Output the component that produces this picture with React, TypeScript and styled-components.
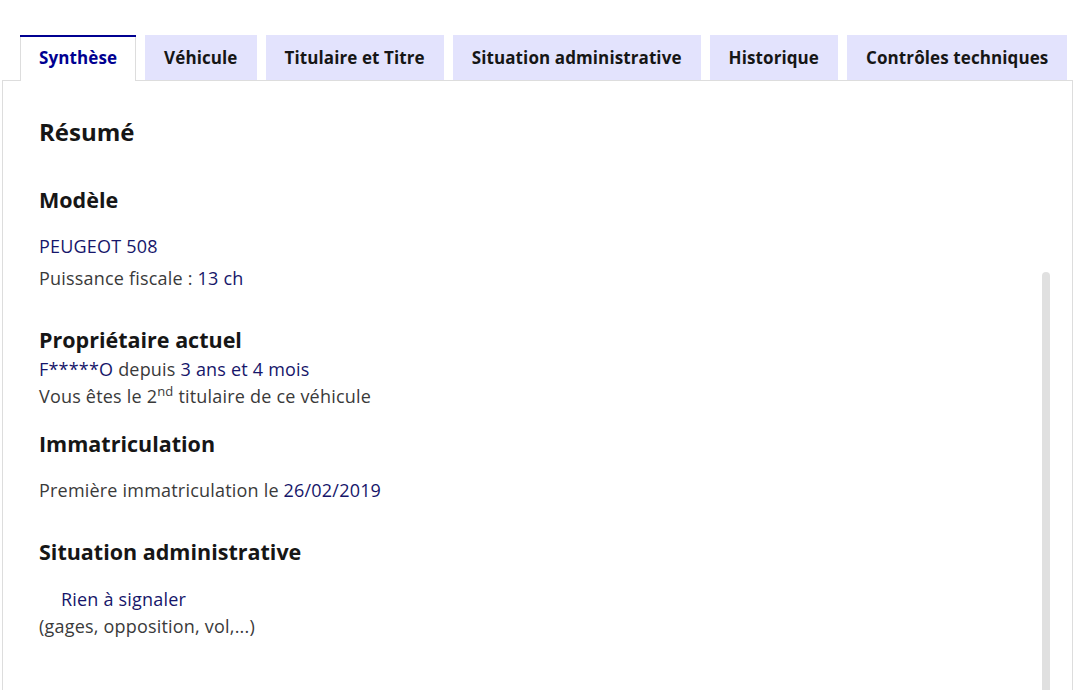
import React from 'react';
import styled, { createGlobalStyle } from 'styled-components';

const GlobalStyle = createGlobalStyle`
    * {
        box-sizing: border-box;
    }
    body {
        margin: 0;
        background: #ffffff;
        font-family: "Open Sans", "Noto Sans", Arial, sans-serif;
        color: #3a3a3a;
    }
`;

type TabProps = {
    $active?: boolean;
};

const tabs = [
    'Synthèse',
    'Véhicule',
    'Titulaire et Titre',
    'Situation administrative',
    'Historique',
    'Contrôles techniques',
];

const StyledPage = styled.div`
    padding: 35px 0 0 2px;
    width: 1073px;
`;

const StyledTabList = styled.ul`
    display: flex;
    flex-direction: row;
    gap: 9px;
    margin: 0;
    padding: 0 0 0 18px;
    list-style: none;
    position: relative;
    z-index: 1;
`;

const StyledTab = styled.li<TabProps>`
    height: ${(p) => (p.$active ? '46px' : '45px')};
    padding: 9px 19px;
    font-size: 17px;
    line-height: 27px;
    letter-spacing: 0.1px;
    font-weight: 700;
    white-space: nowrap;
    color: ${(p) => (p.$active ? '#000091' : '#161616')};
    background: ${(p) => (p.$active ? '#ffffff' : '#e3e3fd')};
    box-shadow: ${(p) =>
        p.$active
            ? 'inset 0 2px 0 0 #000091, inset 1px 0 0 0 #dddddd, inset -1px 0 0 0 #dddddd'
            : 'none'};
`;

const StyledPanel = styled.section`
    position: relative;
    margin-top: -1px;
    border: 1px solid #dddddd;
    border-bottom: none;
    padding: 33px 36px 60px;
    height: 620px;
    overflow: hidden;
`;

const StyledScrollThumb = styled.div`
    position: absolute;
    top: 191px;
    right: 22px;
    width: 8px;
    height: 600px;
    border-radius: 4px 4px 0 0;
    background: #e0e0e0;
`;

const StyledTitle = styled.h2`
    margin: 0;
    font-size: 24px;
    line-height: 36px;
    font-weight: 700;
    color: #161616;
`;

const StyledSubtitle = styled.h3<{ $gap: number }>`
    margin: ${(p) => p.$gap}px 0 0;
    font-size: 21.5px;
    line-height: 32px;
    font-weight: 700;
    color: #161616;
`;

const StyledText = styled.p<{ $gap?: number; $indent?: number }>`
    margin: ${(p) => p.$gap ?? 0}px 0 0;
    padding-left: ${(p) => p.$indent ?? 0}px;
    font-size: 18px;
    line-height: 27px;
    letter-spacing: 0.2px;
    color: #3a3a3a;
`;

const StyledValue = styled.span`
    color: #16166a;
`;

const StyledSup = styled.sup`
    font-size: 13px;
    line-height: 0;
    vertical-align: 7px;
`;

function App() {
    return (
        <>
            <GlobalStyle />
            <StyledPage>
                <StyledTabList>
                    {tabs.map((label, i) => (
                        <StyledTab key={label} $active={i === 0}>
                            {label}
                        </StyledTab>
                    ))}
                </StyledTabList>
                <StyledPanel>
                    <StyledScrollThumb />
                    <StyledTitle>Résumé</StyledTitle>

                    <StyledSubtitle $gap={34}>Modèle</StyledSubtitle>
                    <StyledText $gap={17}>
                        <StyledValue>PEUGEOT 508</StyledValue>
                    </StyledText>
                    <StyledText $gap={5}>
                        Puissance fiscale : <StyledValue>13 ch</StyledValue>
                    </StyledText>

                    <StyledSubtitle $gap={32}>Propriétaire actuel</StyledSubtitle>
                    <StyledText>
                        <StyledValue>F*****O</StyledValue> depuis <StyledValue>3 ans et 4 mois</StyledValue>
                    </StyledText>
                    <StyledText>
                        Vous êtes le 2<StyledSup>nd</StyledSup> titulaire de ce véhicule
                    </StyledText>

                    <StyledSubtitle $gap={18}>Immatriculation</StyledSubtitle>
                    <StyledText $gap={17}>
                        Première immatriculation le <StyledValue>26/02/2019</StyledValue>
                    </StyledText>

                    <StyledSubtitle $gap={32}>Situation administrative</StyledSubtitle>
                    <StyledText $gap={18} $indent={22}>
                        <StyledValue>Rien à signaler</StyledValue>
                    </StyledText>
                    <StyledText>(gages, opposition, vol,...)</StyledText>
                </StyledPanel>
            </StyledPage>
        </>
    );
}

export default App;
